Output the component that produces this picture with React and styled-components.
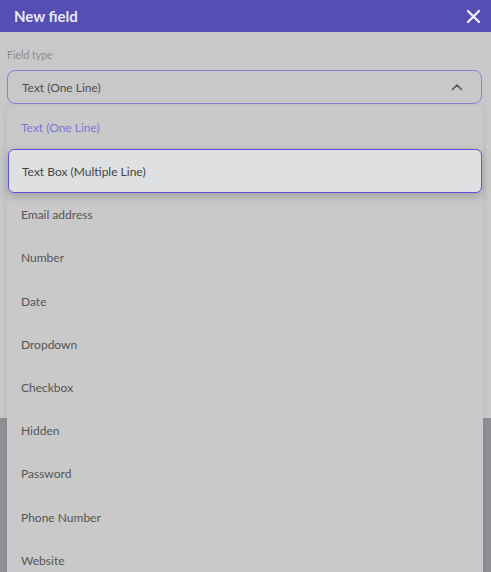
import React from "react";
import styled, { createGlobalStyle } from "styled-components";

const Global = createGlobalStyle`
  html, body {
    margin: 0;
    padding: 0;
    background: #8e9096;
    font-family: Lato, "Open Sans", sans-serif;
  }
`;

const Page = styled.div`
  position: relative;
  width: 491px;
  height: 572px;
  overflow: hidden;
  background: #8e9096;
`;

const Modal = styled.div`
  height: 418px;
  background: #c8c8c8;
`;

const Header = styled.div`
  height: 32px;
  background: #564fb3;
  display: flex;
  align-items: center;
  justify-content: space-between;
  padding: 0 10px 0 14px;
`;

const Title = styled.div`
  color: #e8e8f2;
  font-size: 15px;
  font-weight: 700;
`;

const Close = styled.div`
  display: flex;
  align-items: center;
`;

const Body = styled.div`
  position: relative;
  padding: 17px 9px 0 7px;
`;

const Label = styled.div`
  font-size: 10.5px;
  line-height: 12px;
  color: #8c8c8c;
  margin-bottom: 9px;
`;

const Select = styled.div`
  box-sizing: border-box;
  height: 34px;
  border: 1.5px solid #8a82d6;
  border-radius: 8px;
  display: flex;
  align-items: center;
  justify-content: space-between;
  padding: 0 18px 0 14px;
  font-size: 12px;
  color: #4f4f4f;
`;

const Menu = styled.div`
  position: absolute;
  left: 7px;
  right: 8px;
  top: 74px;
  background: #c9c9c9;
  border-radius: 6px;
  box-shadow: 0 0 6px rgba(0, 0, 0, 0.08);
`;

const Item = styled.div`
  height: 43.2px;
  display: flex;
  align-items: center;
  padding-left: 14px;
  font-size: 12px;
  color: ${(p) => (p.$current ? "#7d74d8" : "#555555")};
  box-sizing: border-box;
  ${(p) =>
    p.$active &&
    `
    background: #dfe0e2;
    border: 1px solid #5b52e6;
    border-radius: 6px;
    margin: 0 1px;
    padding-left: 13px;
    height: 44px;
    color: #444;
    box-shadow: 0 3px 10px rgba(0,0,0,0.22);
  `}
`;

const options = [
  "Text (One Line)",
  "Text Box (Multiple Line)",
  "Email address",
  "Number",
  "Date",
  "Dropdown",
  "Checkbox",
  "Hidden",
  "Password",
  "Phone Number",
  "Website",
];

export default function App() {
  return (
    <Page>
      <Global />
      <Modal>
        <Header>
          <Title>New field</Title>
          <Close>
            <svg width="15" height="15" viewBox="0 0 15 15">
              <path d="M2 2 L13 13 M13 2 L2 13" stroke="#eeeef6" strokeWidth="2.4" strokeLinecap="round" />
            </svg>
          </Close>
        </Header>
        <Body>
          <Label>Field type</Label>
          <Select>
            <span>Text (One Line)</span>
            <svg width="12" height="8" viewBox="0 0 12 8">
              <path d="M1.5 6.5 L6 2 L10.5 6.5" stroke="#555" strokeWidth="1.6" fill="none" strokeLinecap="round" strokeLinejoin="round" />
            </svg>
          </Select>
          <Menu>
            {options.map((o, i) => (
              <Item key={o} $current={i === 0} $active={i === 1}>
                {o}
              </Item>
            ))}
          </Menu>
        </Body>
      </Modal>
    </Page>
  );
}
